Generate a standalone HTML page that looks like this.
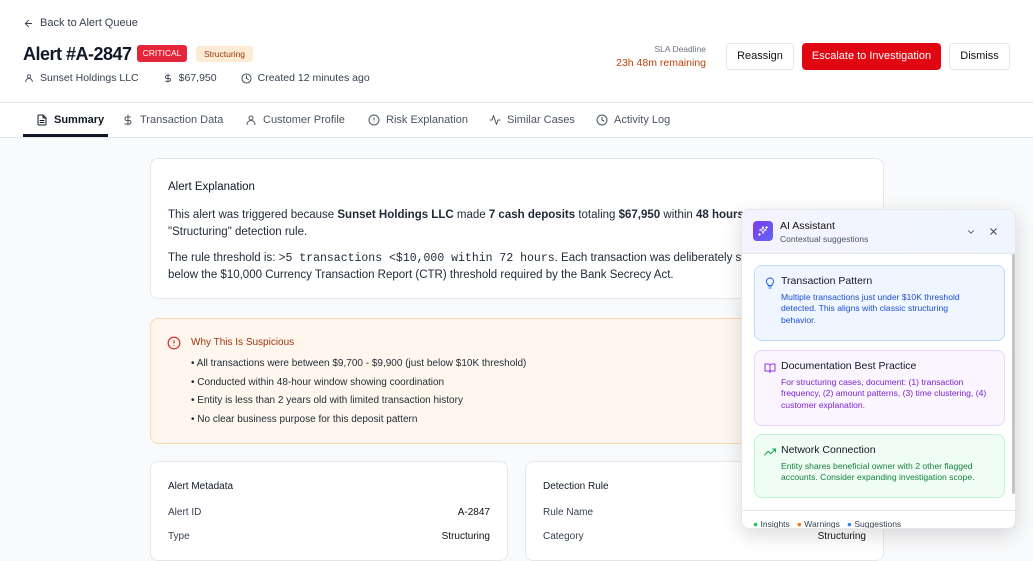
<!DOCTYPE html>
<html><head><meta charset="utf-8"><style>
*{box-sizing:border-box;margin:0;padding:0}
body{width:1033px;height:546px;overflow:hidden;font-family:"Liberation Sans",sans-serif;background:#f9fafb;color:#111827;position:relative}
.hdr{position:absolute;left:0;top:0;width:1033px;height:103px;background:#fff;border-bottom:1px solid #e5e7eb}
.tabs{position:absolute;left:0;top:103px;width:1033px;height:35px;background:#fff;border-bottom:1px solid #e5e7eb}
.tab{position:absolute;top:0;height:34px;line-height:33px;font-size:11px;color:#4b5563;display:flex;align-items:center;gap:6px}
.tab svg{width:12px;height:12px}
.abs{position:absolute}
.card{position:absolute;background:#fff;border:1px solid #e5e7eb;border-radius:8px}
svg{fill:none;stroke:currentColor;stroke-width:2;stroke-linecap:round;stroke-linejoin:round}
.btn{position:absolute;top:43px;height:27px;border:1px solid #e5e7eb;border-radius:4px;background:#fff;font-size:11px;text-align:center;line-height:25px;color:#111}
.sug{position:absolute;left:12px;width:251px;border-radius:8px;padding:10px 28px 0 26px;font-size:8.6px;line-height:11.7px}
.sug b{display:block;font-weight:normal;font-size:10.5px;color:#111827;margin-bottom:4px}
.sug svg{position:absolute;left:9px;top:11px;width:12px;height:12px}
</style></head><body>
<div class="hdr">
 <div class="abs" style="left:23px;top:17px;font-size:11px;color:#374151;display:flex;align-items:center;gap:6px"><svg width="11" height="11" viewBox="0 0 24 24"><path d="M19 12H5M12 19l-7-7 7-7"/></svg>Back to Alert Queue</div>
 <div class="abs" style="left:23px;top:44px;font-size:18px;font-weight:bold;letter-spacing:-0.5px">Alert #A-2847</div>
 <div class="abs" style="left:137px;top:45px;width:50px;height:17px;background:#e5263a;border-radius:3px;color:#fff;font-size:8.5px;line-height:17px;text-align:center">CRITICAL</div>
 <div class="abs" style="left:196px;top:46px;width:57px;height:16px;background:#fdebd3;border-radius:3px;color:#9a3412;font-size:8.5px;line-height:16px;text-align:center">Structuring</div>
 <div class="abs" style="left:24px;top:72px;font-size:10.5px;color:#374151;display:flex;align-items:center;gap:6px"><svg width="10" height="10" viewBox="0 0 24 24"><circle cx="12" cy="8" r="4"/><path d="M4 21a8 8 0 0 1 16 0"/></svg>Sunset Holdings LLC<span style="width:12px"></span><svg width="10" height="10" viewBox="0 0 24 24"><path d="M12 2v20M17 6H9.5a3.5 3.5 0 0 0 0 7h5a3.5 3.5 0 0 1 0 7H6"/></svg>$67,950<span style="width:12px"></span><svg width="11" height="11" viewBox="0 0 24 24"><circle cx="12" cy="12" r="10"/><path d="M12 6v6l4 2"/></svg>Created 12 minutes ago</div>
 <div class="abs" style="right:327px;top:44px;text-align:right;font-size:8.5px;color:#6b7280">SLA Deadline<div style="color:#c2410c;font-size:10.5px;margin-top:3px">23h 48m remaining</div></div>
 <div class="btn" style="left:726px;width:68px">Reassign</div>
 <div class="btn" style="left:802px;width:139px;background:#e00712;border-color:#e00712;color:#fff">Escalate to Investigation</div>
 <div class="btn" style="left:949px;width:61px">Dismiss</div>
</div>
<div class="tabs">
 <div class="tab" style="left:36px;color:#111827;font-weight:bold"><svg viewBox="0 0 24 24"><path d="M14 2H6a2 2 0 0 0-2 2v16a2 2 0 0 0 2 2h12a2 2 0 0 0 2-2V8z"/><path d="M14 2v6h6M16 13H8M16 17H8"/></svg>Summary</div>
 <div class="abs" style="left:23px;top:31px;width:85px;height:3px;background:#111827"></div>
 <div class="tab" style="left:122px"><svg viewBox="0 0 24 24"><path d="M12 2v20M17 6H9.5a3.5 3.5 0 0 0 0 7h5a3.5 3.5 0 0 1 0 7H6"/></svg>Transaction Data</div>
 <div class="tab" style="left:245px"><svg viewBox="0 0 24 24"><circle cx="12" cy="8" r="4"/><path d="M4 21a8 8 0 0 1 16 0"/></svg>Customer Profile</div>
 <div class="tab" style="left:368px"><svg viewBox="0 0 24 24"><circle cx="12" cy="12" r="10"/><path d="M12 8v4M12 16h0"/></svg>Risk Explanation</div>
 <div class="tab" style="left:489px"><svg viewBox="0 0 24 24"><path d="M22 12h-4l-3 9L9 3l-3 9H2"/></svg>Similar Cases</div>
 <div class="tab" style="left:596px"><svg viewBox="0 0 24 24"><circle cx="12" cy="12" r="10"/><path d="M12 6v6l4 2"/></svg>Activity Log</div>
</div>
<div class="card" style="left:150px;top:158px;width:734px;height:141px;padding:20px 17px;font-size:11.5px;line-height:17.5px;color:#1f2937">
 <div style="font-size:11.5px;color:#111827;margin-bottom:10px">Alert Explanation</div>
 <div style="white-space:nowrap">This alert was triggered because <b>Sunset Holdings LLC</b> made <b>7 cash deposits</b> totaling <b>$67,950</b> within <b>48 hours</b></div>
 <div>"Structuring" detection rule.</div>
 <div style="margin-top:8px;white-space:nowrap">The rule threshold is: <span style="font-family:'Liberation Mono',monospace;font-size:11.5px">&gt;5 transactions &lt;$10,000 within 72 hours</span>. Each transaction was deliberately structured</div>
 <div>below the $10,000 Currency Transaction Report (CTR) threshold required by the Bank Secrecy Act.</div>
</div>
<div class="card" style="left:150px;top:318px;width:734px;height:126px;background:#fff7ed;border-color:#fed7aa;padding:18px 0 0 40px;font-size:10px;color:#1f2937">
 <svg class="abs" style="left:16px;top:17px;color:#dc2626" width="14" height="14" viewBox="0 0 24 24"><circle cx="12" cy="12" r="10"/><path d="M12 8v4M12 16h0"/></svg>
 <div style="color:#9a3412;margin-bottom:7px">Why This Is Suspicious</div>
 <div style="line-height:18.7px">• All transactions were between $9,700 - $9,900 (just below $10K threshold)<br>• Conducted within 48-hour window showing coordination<br>• Entity is less than 2 years old with limited transaction history<br>• No clear business purpose for this deposit pattern</div>
</div>
<div class="card" style="left:150px;top:461px;width:358px;height:100px;padding:19px 17px;font-size:10px;color:#374151">
 <div style="color:#111827;margin-bottom:15px">Alert Metadata</div>
 <div style="display:flex;justify-content:space-between;margin-bottom:13px"><span>Alert ID</span><span style="color:#111">A-2847</span></div>
 <div style="display:flex;justify-content:space-between"><span>Type</span><span style="color:#111">Structuring</span></div>
</div>
<div class="card" style="left:525px;top:461px;width:359px;height:100px;padding:19px 17px;font-size:10px;color:#374151">
 <div style="color:#111827;margin-bottom:15px">Detection Rule</div>
 <div style="margin-bottom:13px">Rule Name</div>
 <div style="display:flex;justify-content:space-between"><span>Category</span><span style="color:#111">Structuring</span></div>
</div>
<div class="abs" style="left:741px;top:209px;width:275px;height:320px;background:#fff;border:1px solid #e5e7eb;border-radius:8px;box-shadow:0 6px 20px rgba(0,0,0,.14);overflow:hidden">
 <div style="height:44px;background:linear-gradient(90deg,#f5f3ff,#eff6ff);border-bottom:1px solid #e5e7eb;position:relative">
  <div class="abs" style="left:11px;top:11px;width:20px;height:20px;border-radius:4px;background:linear-gradient(135deg,#7c3aed,#6366f1);color:#fff;display:flex;align-items:center;justify-content:center"><svg width="12" height="12" viewBox="0 0 24 24" style="stroke-width:1.8"><path d="M12 3l1.8 5.2L19 10l-5.2 1.8L12 17l-1.8-5.2L5 10l5.2-1.8z"/><path d="M19 3v4M17 5h4M5 17v4M3 19h4"/></svg></div>
  <div class="abs" style="left:38px;top:10px;font-size:10.5px;color:#111">AI Assistant</div>
  <div class="abs" style="left:38px;top:24px;font-size:8.5px;color:#4b5563">Contextual suggestions</div>
  <svg class="abs" style="left:224px;top:17px;color:#374151" width="10" height="10" viewBox="0 0 24 24"><path d="M6 9l6 6 6-6"/></svg>
  <svg class="abs" style="left:246px;top:16px;color:#374151" width="11" height="11" viewBox="0 0 24 24"><path d="M18 6L6 18M6 6l12 12"/></svg>
 </div>
 <div class="abs" style="left:270px;top:44px;width:3px;height:240px;background:#c4c4c4;border-radius:2px"></div>
 <div class="sug" style="top:55px;height:76px;background:#eff6ff;border:1px solid #bfdbfe;color:#1d4ed8"><svg viewBox="0 0 24 24" style="color:#2563eb"><path d="M9 18h6M10 22h4M12 2a7 7 0 0 0-4 12.7V17h8v-2.3A7 7 0 0 0 12 2z"/></svg><b>Transaction Pattern</b>Multiple transactions just under $10K threshold detected. This aligns with classic structuring behavior.</div>
 <div class="sug" style="top:140px;height:76px;background:#faf5ff;border:1px solid #e9d5ff;color:#7e22ce;padding-right:14px"><svg viewBox="0 0 24 24" style="color:#9333ea"><path d="M2 4h6a4 4 0 0 1 4 4v13a3 3 0 0 0-3-3H2zM22 4h-6a4 4 0 0 0-4 4v13a3 3 0 0 1 3-3h7z"/></svg><b>Documentation Best Practice</b>For structuring cases, document: (1) transaction frequency, (2) amount patterns, (3) time clustering, (4) customer explanation.</div>
 <div class="sug" style="top:224px;height:64px;background:#f0fdf4;border:1px solid #bbf7d0;color:#15803d;padding-right:14px"><svg viewBox="0 0 24 24" style="color:#16a34a"><path d="M23 6l-9.5 9.5-5-5L1 18M17 6h6v6"/></svg><b>Network Connection</b>Entity shares beneficial owner with 2 other flagged accounts. Consider expanding investigation scope.</div>
 <div class="abs" style="left:0;top:300px;width:275px;border-top:1px solid #e5e7eb;padding:8px 0 0 11px;font-size:8.5px;color:#374151;display:flex;gap:7px">
  <span><span style="color:#22c55e">●</span> Insights</span><span><span style="color:#f97316">●</span> Warnings</span><span><span style="color:#3b82f6">●</span> Suggestions</span></div>
</div>
</body></html>
